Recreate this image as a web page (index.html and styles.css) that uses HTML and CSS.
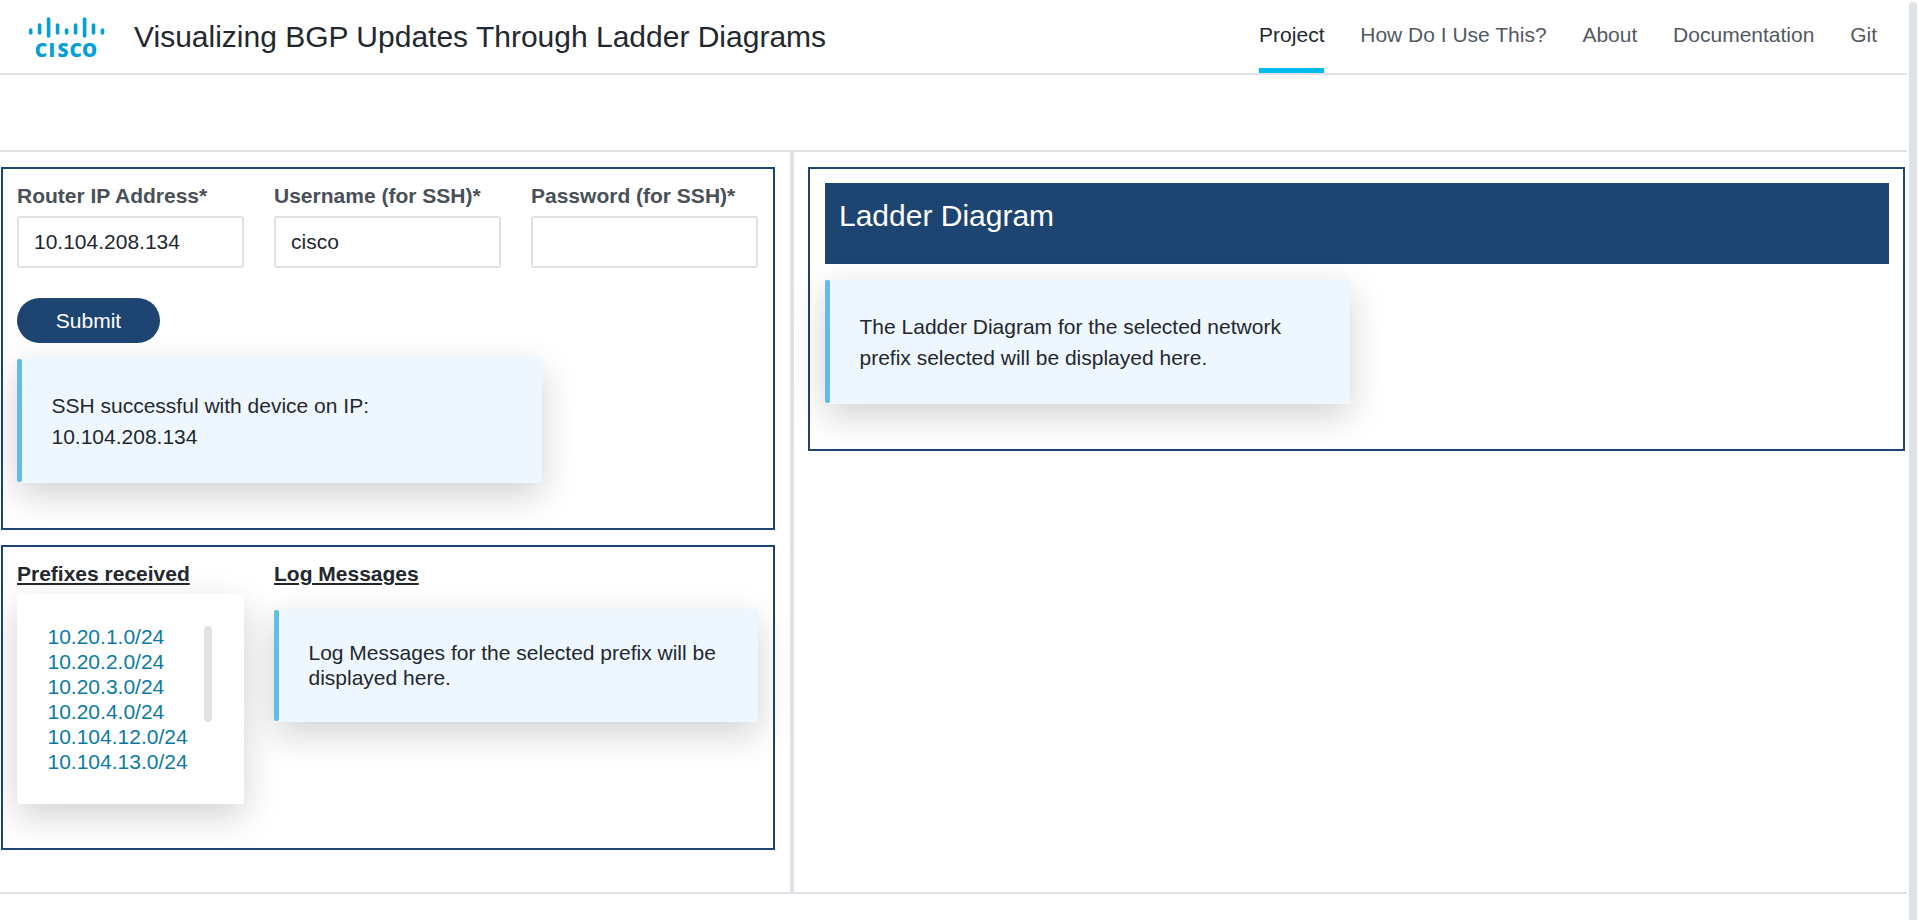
FILE: index.html
```html
<!DOCTYPE html>
<html lang="en">
<head>
<meta charset="utf-8">
<title>Visualizing BGP Updates Through Ladder Diagrams</title>
<link rel="stylesheet" href="styles.css">
</head>
<body>
<div class="page">
  <header class="header">
    <svg class="logo" width="78" height="54" viewBox="0 0 78 54" role="img" aria-label="Cisco">
      <g stroke="#049fd9" stroke-width="3.6" stroke-linecap="round">
        <path d="M2.7 14v3M11.6 9v8M20.6 3v17M29.6 9v8M38.6 14v3M47.6 9v8M56.6 3v17M65.5 9v8M74.5 14v3"/>
      </g>
      <text class="logo-text" x="6.8 20.5 29.4 41.4 54" y="41">CISCO</text>
    </svg>
    <h1 class="title">Visualizing BGP Updates Through Ladder Diagrams</h1>
    <nav class="nav">
      <a class="nav-link active">Project</a>
      <a class="nav-link">How Do I Use This?</a>
      <a class="nav-link">About</a>
      <a class="nav-link">Documentation</a>
      <a class="nav-link">Git</a>
    </nav>
  </header>
  <div class="toolbar"></div>
  <main class="main">
    <section class="left">
      <form class="panel connect">
        <div class="fields">
          <label class="field">Router IP Address*<input class="input" type="text" value="10.104.208.134"></label>
          <label class="field">Username (for SSH)*<input class="input" type="text" value="cisco"></label>
          <label class="field">Password (for SSH)*<input class="input" type="password"></label>
        </div>
        <button class="submit" type="button">Submit</button>
        <div class="alert">SSH successful with device on IP:<br>10.104.208.134</div>
      </form>
      <div class="panel results">
        <div class="prefixes">
          <h2 class="heading">Prefixes received</h2>
          <div class="card">
            <div class="list">
              <a>10.20.1.0/24</a>
              <a>10.20.2.0/24</a>
              <a>10.20.3.0/24</a>
              <a>10.20.4.0/24</a>
              <a>10.104.12.0/24</a>
              <a>10.104.13.0/24</a>
            </div>
            <div class="list-thumb"></div>
          </div>
        </div>
        <div class="logs">
          <h2 class="heading">Log Messages</h2>
          <div class="alert compact">Log Messages for the selected prefix will be<br>displayed here.</div>
        </div>
      </div>
    </section>
    <section class="right">
      <div class="panel diagram">
        <h2 class="banner">Ladder Diagram</h2>
        <div class="alert">The Ladder Diagram for the selected network<br>prefix selected will be displayed here.</div>
      </div>
    </section>
  </main>
</div>
<div class="page-thumb"></div>
</body>
</html>
```
FILE: styles.css
```css
* { box-sizing: border-box; }

body {
  margin: 0;
  height: 920px;
  overflow: hidden;
  display: flex;
  gap: 2px;
  background: #fff;
  color: #23282e;
  font-family: "Liberation Sans", Arial, sans-serif;
  font-size: 21px;
}

h1, h2 { margin: 0; font-weight: normal; }

.page { width: 1907px; }

.page-thumb {
  width: 8px;
  margin-top: 2px;
  height: 940px;
  border-radius: 4px;
  background: #dee2e6;
}

.header {
  display: flex;
  align-items: flex-start;
  height: 75px;
  padding: 0 30px 0 28px;
  border-bottom: 2px solid #dee2e6;
}

.logo { margin-top: 16px; }

.logo-text {
  font-family: "Open Sans", sans-serif;
  font-size: 19px;
  font-weight: 800;
  fill: #049fd9;
}

.title {
  margin: 19px 0 0 28px;
  font-size: 30px;
  line-height: 36px;
}

.nav { display: flex; gap: 35.8px; margin-left: auto; }

.nav-link {
  height: 73px;
  padding-top: 23px;
  line-height: 24px;
  color: #525961;
}

.nav-link.active {
  color: #23282e;
  border-bottom: 5px solid #00bceb;
}

.toolbar { height: 77px; border-bottom: 2px solid #dee2e6; }

.main {
  display: flex;
  height: 742px;
  border-bottom: 2px solid #dee2e6;
}

.left {
  width: 794px;
  padding: 15px 15px 0 1px;
  border-right: 4px solid #dee2e6;
}

.right { flex: 1; padding: 15px 2px 0 14px; }

.panel { border: 2px solid #1e4471; padding: 14px 15px 0 14px; }

.connect { height: 363px; }

.fields { display: grid; grid-template-columns: repeat(3, 227px); gap: 30px; }

.field {
  padding-top: 1px;
  font-weight: bold;
  line-height: 24px;
  color: #495057;
}

.input {
  display: block;
  width: 227px;
  height: 52px;
  margin-top: 8px;
  padding: 0 15px;
  border: 2px solid #dee2e6;
  border-radius: 3px;
  background: #fff;
  color: #23282e;
  font: 21px "Liberation Sans", Arial, sans-serif;
}

.submit {
  display: block;
  width: 143px;
  height: 45px;
  margin: 30px 0 15px;
  padding: 0;
  border: 0;
  border-radius: 23px;
  background: #1e4471;
  color: #fff;
  font: 21px "Liberation Sans", Arial, sans-serif;
}

.alert {
  position: relative;
  width: 525px;
  height: 125px;
  padding: 32px 29px 0 34.5px;
  border-radius: 3px;
  background: #eff7fe;
  box-shadow: 0 12px 36px rgba(0, 0, 0, .18);
  line-height: 31px;
}

.alert::before {
  content: "";
  position: absolute;
  left: 0;
  top: 1px;
  bottom: 1px;
  width: 5px;
  border-radius: 2px;
  background: #64bbe3;
}

.results {
  display: flex;
  gap: 30px;
  height: 305px;
  margin-top: 15px;
  padding-top: 15px;
}

.prefixes { width: 227px; }

.heading {
  font-size: 21px;
  font-weight: bold;
  line-height: 24px;
  text-decoration: underline;
  text-decoration-thickness: 2px;
  text-underline-offset: 2px;
}

.card {
  display: flex;
  justify-content: space-between;
  width: 227px;
  height: 210px;
  margin-top: 8px;
  padding: 30px 32px 30px 30.5px;
  border-radius: 3px;
  background: #fff;
  box-shadow: 0 12px 36px rgba(0, 0, 0, .18);
}

.list {
  display: flex;
  flex-direction: column;
  line-height: 25px;
  color: #0b7ba5;
}

.list-thumb {
  width: 8px;
  height: 96px;
  margin-top: 2px;
  border-radius: 4px;
  background: #dee2e6;
}

.alert.compact {
  width: 484px;
  height: 113px;
  margin-top: 23px;
  padding-top: 31px;
  line-height: 25px;
}

.diagram { height: 284px; }

.banner {
  height: 81px;
  margin: 0 -1px 15px 1px;
  padding: 15px 14px;
  background: #1e4471;
  color: #fff;
  font-size: 30px;
  line-height: 36px;
}

.diagram .alert { margin-left: 1px; }
```
